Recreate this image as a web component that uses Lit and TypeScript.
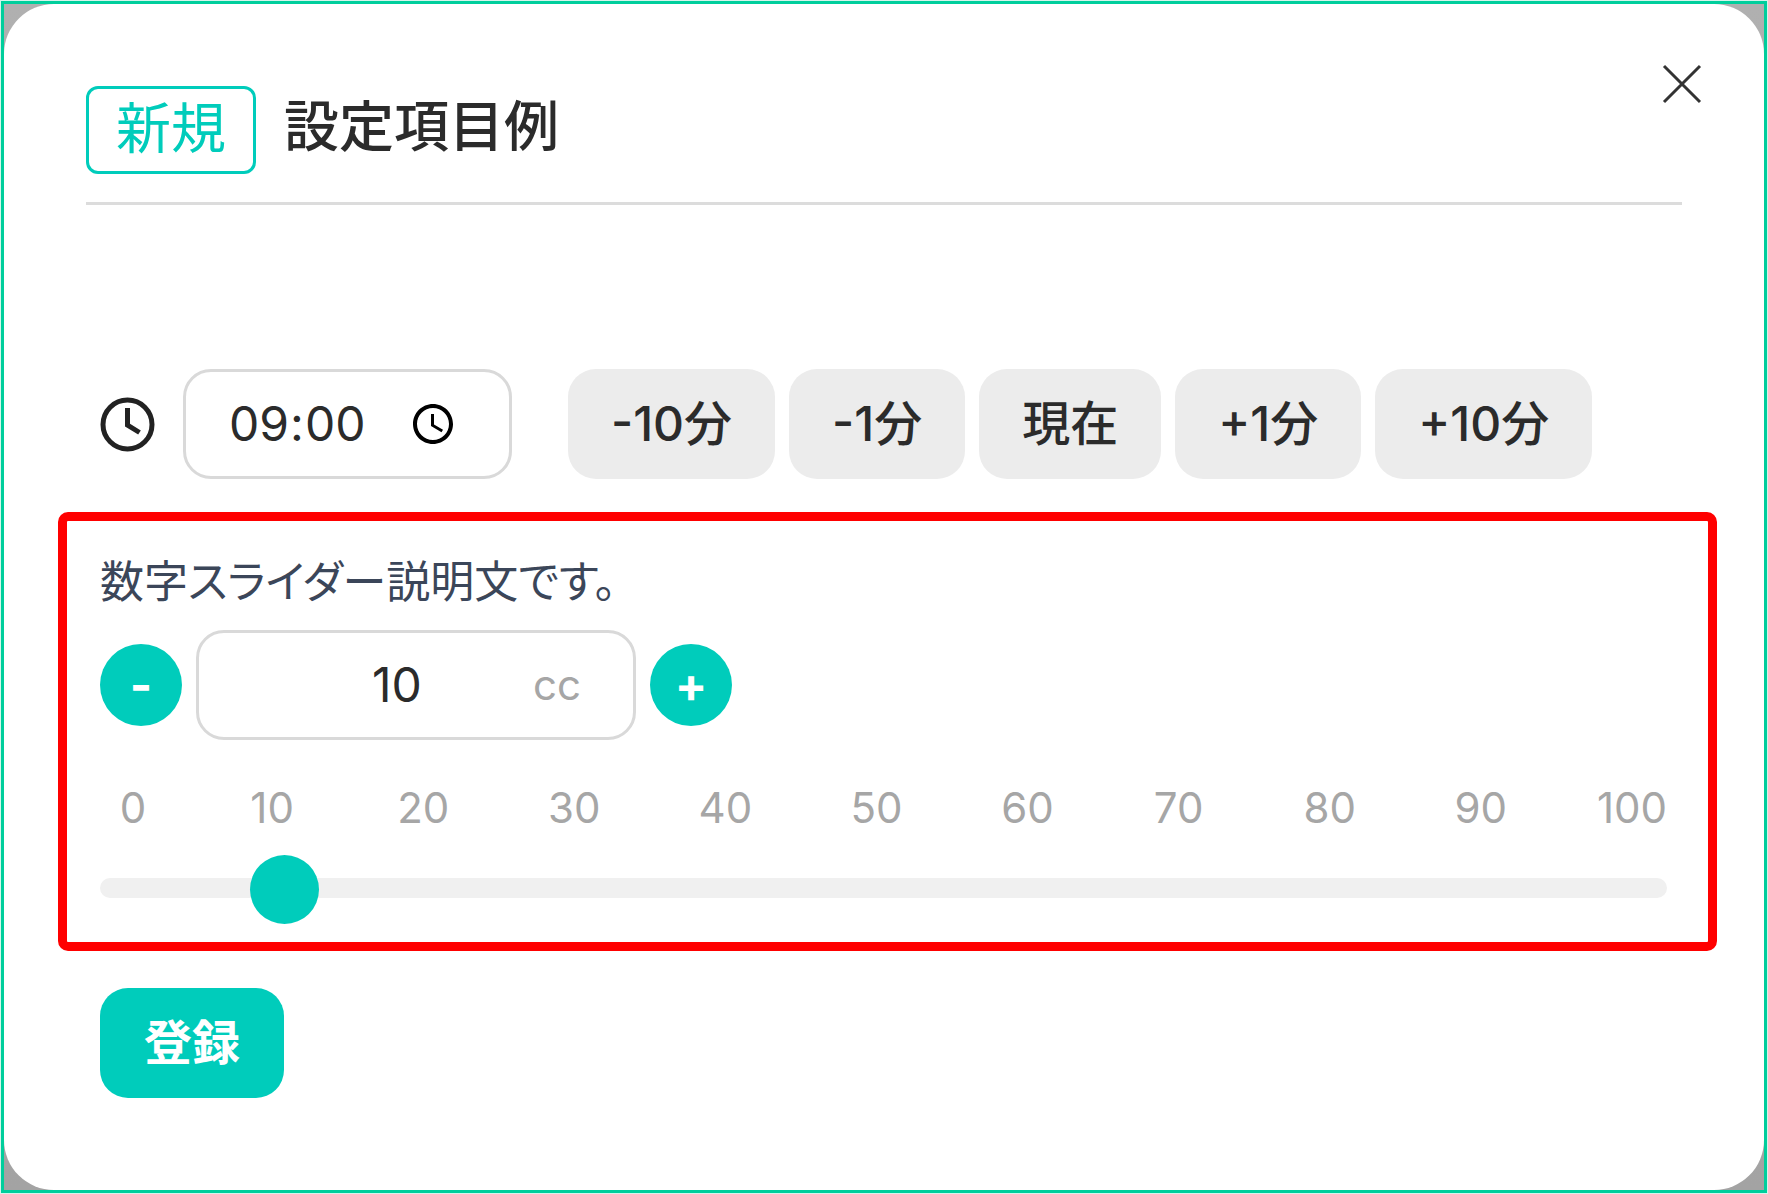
import { LitElement, html, css } from "lit";
import { customElement, state } from "lit/decorators.js";

const STEPS = [
  { label: "-10分", delta: -10 },
  { label: "-1分", delta: -1 },
  { label: "現在", delta: null },
  { label: "+1分", delta: 1 },
  { label: "+10分", delta: 10 },
];

const TICKS = [0, 10, 20, 30, 40, 50, 60, 70, 80, 90, 100];

@customElement("app-root")
export class AppRoot extends LitElement {
  @state() private time = "09:00";
  @state() private amount = 10;

  static styles = css`
    :host {
      display: block;
      box-sizing: border-box;
      min-height: 100vh;
      padding: 1px;
      background: #d5f5ec;
      color: #2b2b2b;
      font-family: Inter, "Noto Sans CJK JP", sans-serif;
      font-size: 48px;
      line-height: 56px;
    }
    * {
      box-sizing: border-box;
    }
    button,
    input {
      margin: 0;
      font: inherit;
      color: inherit;
    }
    button {
      border: 0;
      padding: 0;
      cursor: pointer;
    }
    .backdrop {
      display: flex;
      min-height: calc(100vh - 2px);
      border: 3px solid #00ce9c;
      background: linear-gradient(#b0b0b0, #a3a3a3);
    }
    .dialog {
      flex: 1;
      min-width: 0;
      display: flex;
      flex-direction: column;
      padding-bottom: 92px;
      border-radius: 50px;
      background: #fff;
    }
    .head {
      position: relative;
      display: flex;
      align-items: center;
      gap: 28px;
      margin: 0 82px;
      padding: 82px 0 28px;
      border-bottom: 3px solid #dcdcdc;
    }
    .badge {
      padding: 9px 27px 13px;
      border: 3px solid #00ccbb;
      border-radius: 12px;
      color: #00ccbb;
      font-size: 55px;
      line-height: 60px;
    }
    .title {
      margin: 0;
      padding-bottom: 8px;
      font-size: 55px;
      line-height: 60px;
      font-weight: 500;
    }
    .close {
      position: absolute;
      top: 56px;
      right: -24px;
      width: 48px;
      height: 48px;
      background: none;
    }
    .close svg,
    .clock {
      display: block;
    }
    .time-row {
      display: flex;
      align-items: center;
      margin: 164px 82px 33px 96px;
    }
    .clock {
      flex: none;
      margin-right: 28px;
    }
    .field {
      height: 110px;
      border: 3px solid #d9d9d9;
      border-radius: 28px;
      background: #fff;
    }
    .time {
      width: 329px;
      margin-right: 56px;
      padding: 0 52px 0 42px;
      outline: none;
    }
    .time::-webkit-datetime-edit-ampm-field {
      display: none;
    }
    .time::-webkit-datetime-edit-fields-wrapper {
      white-space: nowrap;
    }
    .time::-webkit-calendar-picker-indicator {
      width: 48px;
      height: 48px;
      padding: 0;
      margin: 0;
    }
    .steps {
      display: flex;
      flex-wrap: wrap;
      gap: 14px;
    }
    .step,
    .submit {
      height: 110px;
      border-radius: 28px;
    }
    .step {
      padding: 0 43px;
      background: #ececec;
      font-weight: 500;
    }
    .slider-box {
      display: flex;
      flex-direction: column;
      margin: 0 47px 37px 54px;
      padding: 33px 41px 19px 33px;
      border: 9px solid #f00;
      border-radius: 10px;
    }
    .caption {
      color: #3b4659;
      font-feature-settings: "palt";
      font-size: 44px;
    }
    .counter {
      display: flex;
      align-items: center;
      gap: 14px;
      margin: 20px 0 40px;
    }
    .round {
      width: 82px;
      height: 82px;
      border-radius: 50%;
      background: #00ccbb;
      color: #fff;
      font-weight: 700;
    }
    .amount {
      display: flex;
      align-items: center;
      width: 440px;
      padding: 0 52px 0 62px;
    }
    .amount input {
      flex: 1;
      min-width: 0;
      padding: 0;
      border: 0;
      outline: none;
      background: none;
      text-align: center;
    }
    .unit,
    .ticks {
      color: #a6a6a6;
      font-size: 42px;
    }
    .ticks {
      display: flex;
      justify-content: space-between;
      padding: 0 9px 0 19px;
    }
    .tick {
      display: flex;
      justify-content: center;
      width: 52px;
    }
    .tick:first-child {
      width: 28px;
    }
    .range {
      width: 100%;
      height: 70px;
      margin-top: 17px;
      background: none;
      appearance: none;
      -webkit-appearance: none;
      outline: none;
    }
    .range::-webkit-slider-runnable-track {
      height: 20px;
      border-radius: 10px;
      background: #f0f0f0;
    }
    .range::-webkit-slider-thumb {
      -webkit-appearance: none;
      width: 69px;
      height: 69px;
      margin-top: -23px;
      border-radius: 50%;
      background: #00ccbb;
    }
    .submit {
      align-self: flex-start;
      margin-left: 96px;
      padding: 0 44px;
      background: #00ccbb;
      color: #fff;
      font-weight: 700;
    }
  `;

  private shift(delta: number | null) {
    const now = new Date();
    const [h, m] = this.time.split(":").map(Number);
    const total = delta === null ? now.getHours() * 60 + now.getMinutes() : (h * 60 + m + delta + 1440) % 1440;
    const pad = (n: number) => String(n).padStart(2, "0");
    this.time = `${pad(Math.floor(total / 60))}:${pad(total % 60)}`;
  }

  private setAmount(value: number) {
    this.amount = Math.max(0, Math.min(100, value || 0));
  }

  render() {
    return html`
      <div class="backdrop">
        <main class="dialog" role="dialog" aria-labelledby="title">
          <header class="head">
            <span class="badge">新規</span>
            <h1 class="title" id="title">設定項目例</h1>
            <button class="close" type="button" aria-label="閉じる">
              <svg width="48" height="48" viewBox="0 0 48 48" fill="none" stroke="#333" stroke-width="3">
                <path d="M6 6 42 42M42 6 6 42" />
              </svg>
            </button>
          </header>

          <div class="time-row">
            <svg class="clock" width="55" height="55" viewBox="0 0 55 55" fill="none" stroke="#222" stroke-width="5">
              <circle cx="27.5" cy="27.5" r="24.5" />
              <path d="M27.5 11V28L39.5 35.5" />
            </svg>
            <input class="field time" type="time" aria-label="時刻" .value=${this.time}
              @change=${(e: Event) => (this.time = (e.target as HTMLInputElement).value)} />
            <div class="steps">
              ${STEPS.map(
                (s) => html`<button class="step" type="button" @click=${() => this.shift(s.delta)}>${s.label}</button>`
              )}
            </div>
          </div>

          <section class="slider-box">
            <label class="caption" for="range">数字スライダー説明文です。</label>
            <div class="counter">
              <button class="round" type="button" @click=${() => this.setAmount(this.amount - 1)}>-</button>
              <label class="field amount">
                <input type="text" inputmode="numeric" aria-label="数量" .value=${String(this.amount)}
                  @change=${(e: Event) => this.setAmount(Number((e.target as HTMLInputElement).value))} />
                <span class="unit">cc</span>
              </label>
              <button class="round" type="button" @click=${() => this.setAmount(this.amount + 1)}>+</button>
            </div>
            <div class="ticks">${TICKS.map((t) => html`<span class="tick">${t}</span>`)}</div>
            <input class="range" id="range" type="range" min="0" max="100" .value=${String(this.amount)}
              @input=${(e: Event) => this.setAmount(Number((e.target as HTMLInputElement).value))} />
          </section>

          <button class="submit" type="button">登録</button>
        </main>
      </div>
    `;
  }
}
